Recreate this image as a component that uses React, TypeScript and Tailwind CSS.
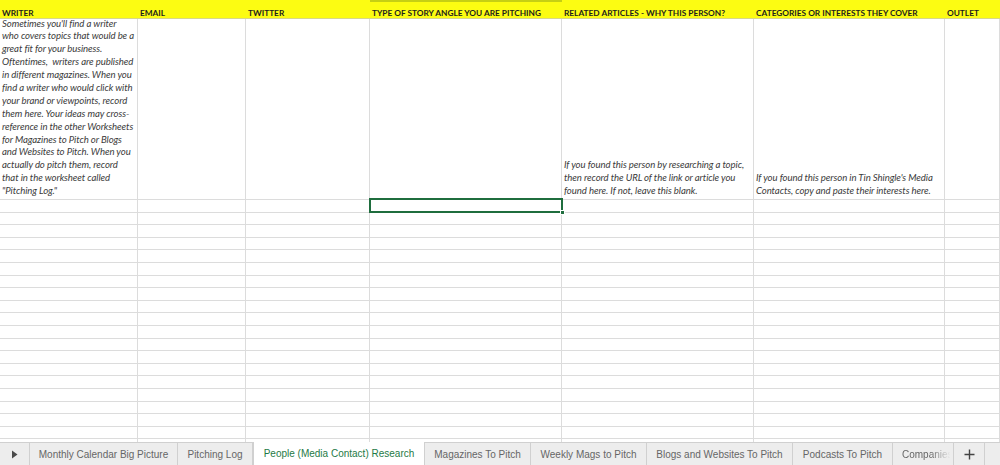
import React from 'react';

const cols = [138, 108, 124, 192, 192, 191, 55];
const headers = [
  'WRITER',
  'EMAIL',
  'TWITTER',
  'TYPE OF STORY ANGLE YOU ARE PITCHING',
  'RELATED ARTICLES - WHY THIS PERSON?',
  'CATEGORIES OR INTERESTS THEY COVER',
  'OUTLET',
];

const writerNote = [
  "Sometimes you'll find a writer",
  'who covers topics that would be a',
  'great fit for your business.',
  'Oftentimes,  writers are published',
  'in different magazines. When you',
  'find a writer who would click with',
  'your brand or viewpoints, record',
  'them here. Your ideas may cross-',
  'reference in the other Worksheets',
  'for Magazines to Pitch or Blogs',
  'and Websites to Pitch. When you',
  'actually do pitch them, record',
  'that in the worksheet called',
  '"Pitching Log."',
];

const articlesNote = [
  'If you found this person by researching a topic,',
  'then record the URL of the link or article you',
  'found here. If not, leave this blank.',
];

const categoriesNote = [
  "If you found this person in Tin Shingle's Media",
  'Contacts, copy and paste their interests here.',
];

const notes: Record<number, string[]> = { 0: writerNote, 4: articlesNote, 5: categoriesNote };

const tabs = [
  { name: 'Monthly Calendar Big Picture', w: 148 },
  { name: 'Pitching Log', w: 75 },
  { name: 'People (Media Contact) Research', w: 172, active: true },
  { name: 'Magazines To Pitch', w: 106 },
  { name: 'Weekly Mags to Pitch', w: 116 },
  { name: 'Blogs and Websites To Pitch', w: 146 },
  { name: 'Podcasts To Pitch', w: 100 },
];

const Note: React.FC<{ lines: string[] }> = ({ lines }) => (
  <div className="flex flex-col justify-end h-full pl-[2px] pb-[1px] overflow-hidden">
    {lines.map((l) => (
      <div key={l} className="whitespace-pre leading-[12.9px] h-[12.9px] text-[9.6px] tracking-[-0.08px] italic text-[#3a3a3a]">
        {l}
      </div>
    ))}
  </div>
);

const App: React.FC = () => {
  const emptyRows = Array.from({ length: 20 });

  return (
    <div className="w-[1000px] h-[465px] bg-white flex flex-col overflow-hidden" style={{ fontFamily: 'Lato, "Open Sans", sans-serif' }}>
      {/* Sheet */}
      <div className="relative flex-1 overflow-hidden">
        {/* Header row */}
        <div className="flex h-[19px] bg-[#fcfc12] border-b border-[#d7d78a]">
          {headers.map((h, i) => (
            <div
              key={h}
              style={{ width: cols[i] }}
              className={`shrink-0 flex items-end pl-[2px] leading-[10px] text-[8.3px] font-bold text-[#1d1d1d] whitespace-nowrap ${i === 3 ? 'border-t-2 border-[#c6cf14]' : ''}`}
            >
              {h}
            </div>
          ))}
        </div>

        {/* Notes row */}
        <div className="flex h-[181px] border-b border-[#dcdcdc]">
          {cols.map((w, i) => (
            <div key={i} style={{ width: w }} className="shrink-0 border-r border-[#dcdcdc]">
              {notes[i] && <Note lines={notes[i]} />}
            </div>
          ))}
        </div>

        {/* Empty rows */}
        {emptyRows.map((_, r) => (
          <div key={r} className="flex h-[12.6px] border-b border-[#dcdcdc]">
            {cols.map((w, i) => (
              <div key={i} style={{ width: w }} className="shrink-0 border-r border-[#dcdcdc]" />
            ))}
          </div>
        ))}

        {/* Selected cell */}
        <div className="absolute left-[369px] top-[198px] w-[194px] h-[15px] border-2 border-[#1f6d3e]">
          <div className="absolute -right-[4px] -bottom-[4px] w-[5px] h-[5px] bg-[#1f6d3e] border border-white" />
        </div>
      </div>

      {/* Sheet tabs */}
      <div
        className="flex h-[23px] shrink-0 bg-[#ededed] border-t border-[#d0d0d0] text-[10px] text-[#666]"
        style={{ fontFamily: '"Liberation Sans", Arial, sans-serif' }}
      >
        <div className="w-[30px] shrink-0 flex items-center justify-center border-r border-[#d0d0d0]">
          <svg width="7" height="9" viewBox="0 0 7 9">
            <path d="M1 0.5 L6.5 4.5 L1 8.5 Z" fill="#4a4a4a" />
          </svg>
        </div>
        {tabs.map((t) => (
          <div
            key={t.name}
            style={{ width: t.w }}
            className={`shrink-0 flex items-center justify-center whitespace-nowrap border-r border-[#d0d0d0] ${
              t.active ? 'bg-white text-[#1e7a46] -mt-[1px] border-l' : ''
            }`}
          >
            {t.name}
          </div>
        ))}
        <div className="w-[61px] shrink-0 flex items-center pl-[9px] whitespace-nowrap overflow-hidden border-r border-[#d0d0d0]">
          <span className="[mask-image:linear-gradient(to_right,black_55%,transparent_95%)]">Companies</span>
        </div>
        <div className="w-[31px] shrink-0 flex items-center justify-center border-r border-[#d0d0d0]">
          <svg width="11" height="11" viewBox="0 0 11 11">
            <path d="M5.5 0.5 V10.5 M0.5 5.5 H10.5" stroke="#444" strokeWidth="1.4" />
          </svg>
        </div>
        <div className="flex-1" />
      </div>
    </div>
  );
};

export default App;
